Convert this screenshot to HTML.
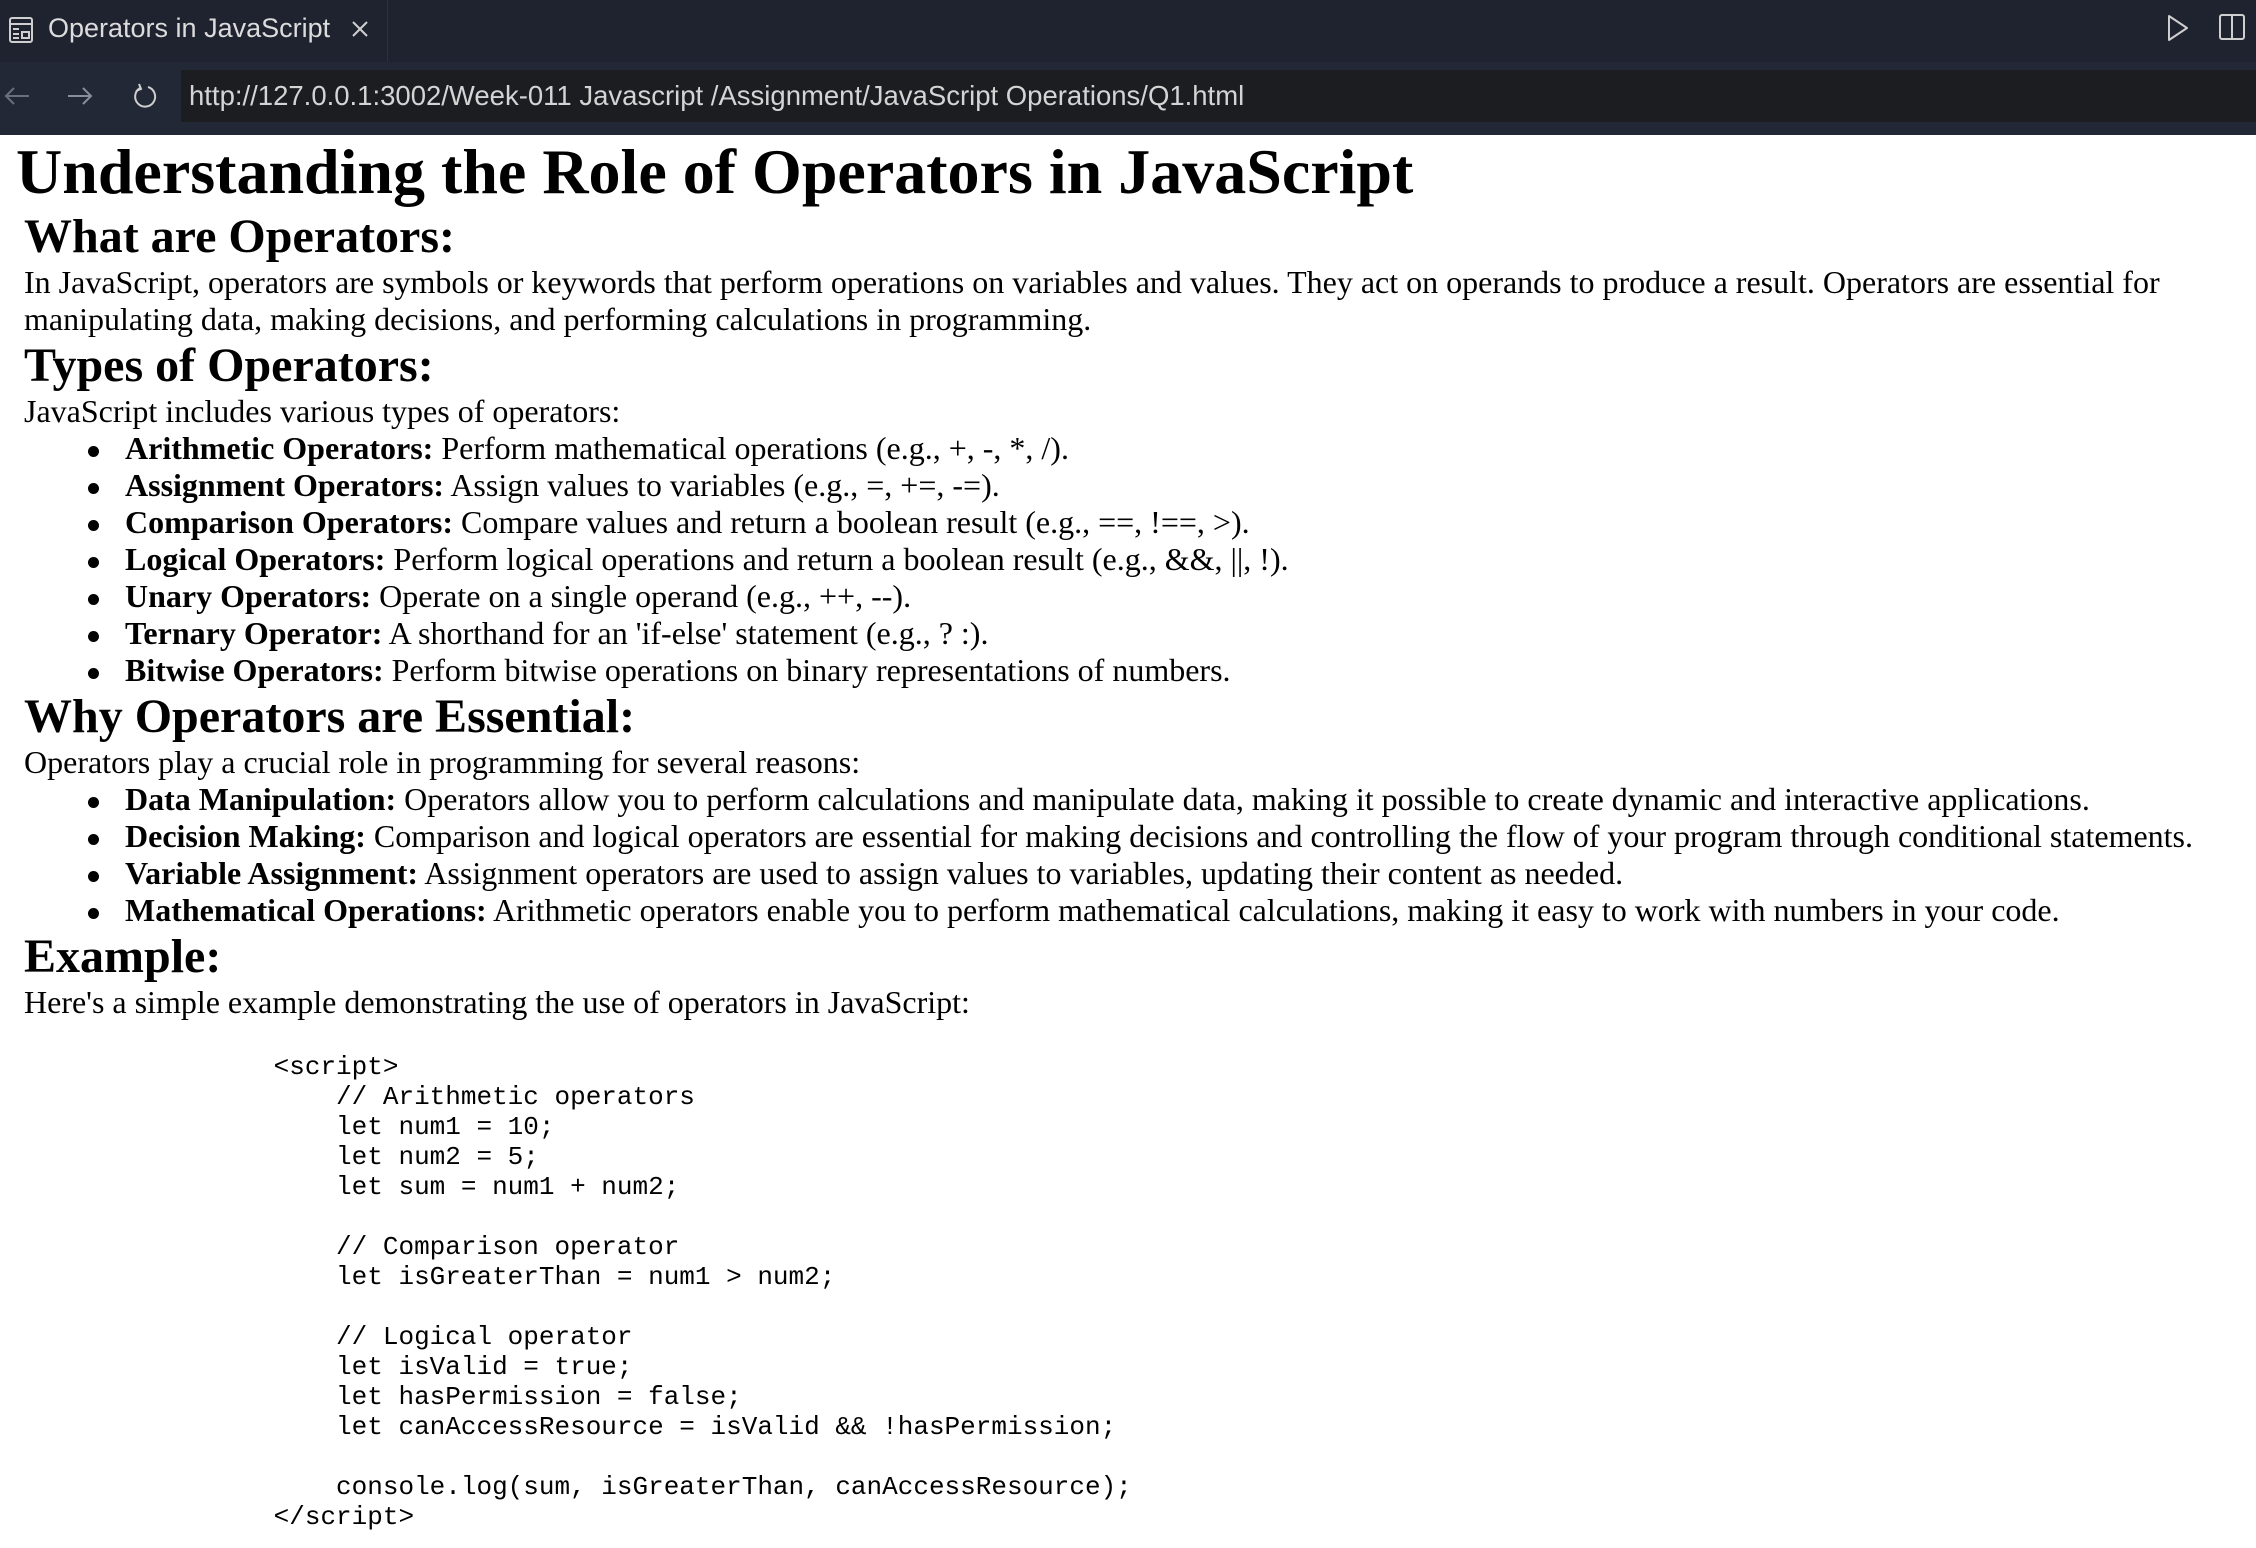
<!DOCTYPE html>
<html><head><meta charset="utf-8">
<style>
*{box-sizing:border-box}
html,body{margin:0;padding:0;width:2256px;height:1548px;overflow:hidden;background:#fff}
#tabs{position:absolute;left:0;top:0;width:2256px;height:62px;background:#1f2330}
#tab{position:absolute;left:0;top:0;width:388px;height:62px;background:#1f2330;border-right:1px solid #2c3140}
#tab .t{position:absolute;left:48px;top:13px;font:27px "Liberation Sans",sans-serif;color:#dcdcdc;white-space:nowrap}
#url{position:absolute;left:0;top:62px;width:2256px;height:73px;background:#232836}
#field{position:absolute;left:181px;top:8px;right:0;height:52px;background:#1c1d21}
#field .u{position:absolute;left:8px;top:10px;font:27.5px "Liberation Sans",sans-serif;color:#d4d4d4;white-space:nowrap}
#page{position:absolute;left:0;top:133px;width:2256px;font-family:"Liberation Serif",serif;color:#000}
h1{margin:0;padding:2px 0 0 16px;font-size:64px;line-height:74px;font-weight:bold;white-space:nowrap}
h2{margin:1px 0 0 24px;font-size:48px;line-height:54px;font-weight:bold}
p{margin:0 0 0 24px;font-size:32px;line-height:37px}
ul{margin:0 0 0 24px;padding-left:101px;font-size:32px;line-height:37px;list-style:none}
li{white-space:nowrap;position:relative}
li::before{content:"";position:absolute;left:-37px;top:16px;width:11px;height:11px;border-radius:50%;background:#000}
pre{margin:31px 0 0 24px;font:26px/30px "Liberation Mono",monospace}
</style></head><body>
<div id="tabs">
 <div id="tab">
  <svg style="position:absolute;left:8px;top:16px" width="26" height="28" viewBox="0 0 26 28" fill="none" stroke="#cfcfcf" stroke-width="2"><rect x="2" y="2" width="22" height="24" rx="2"/><line x1="2" y1="8" x2="24" y2="8"/><line x1="5" y1="13" x2="11" y2="13"/><line x1="5" y1="18" x2="11" y2="18"/><line x1="5" y1="22" x2="11" y2="22"/><rect x="14" y="16" width="7" height="6"/></svg>
  <div class="t">Operators in JavaScript</div>
  <svg style="position:absolute;left:350px;top:19px" width="20" height="20" viewBox="0 0 20 20" stroke="#cfcfcf" stroke-width="2"><line x1="3" y1="3" x2="17" y2="17"/><line x1="17" y1="3" x2="3" y2="17"/></svg>
 </div>
 <svg style="position:absolute;left:2166px;top:14px" width="24" height="28" viewBox="0 0 24 28" fill="none" stroke="#cfcfcf" stroke-width="2" stroke-linejoin="round"><path d="M3 2 L21 14 L3 26 Z"/></svg>
 <svg style="position:absolute;left:2218px;top:13px" width="28" height="28" viewBox="0 0 28 28" fill="none" stroke="#cfcfcf" stroke-width="2"><rect x="2" y="2" width="24" height="24" rx="2"/><line x1="14" y1="2" x2="14" y2="26"/></svg>
</div>
<div id="url">
 <svg style="position:absolute;left:3px;top:22px" width="28" height="24" viewBox="0 0 28 24" fill="none" stroke="#6b6f7a" stroke-width="2"><path d="M26 12 H3 M11 4 L3 12 L11 20"/></svg>
 <svg style="position:absolute;left:66px;top:22px" width="28" height="24" viewBox="0 0 28 24" fill="none" stroke="#8a8e98" stroke-width="2"><path d="M2 12 H25 M17 4 L25 12 L17 20"/></svg>
 <svg style="position:absolute;left:131px;top:20px" width="28" height="30" viewBox="0 0 28 30" fill="none" stroke="#cfcfcf" stroke-width="2"><path d="M9 6 A10 10 0 1 0 17 5"/><path d="M8 2 L10 7 L5 9"/></svg>
 <div id="field"><div class="u">http://127.0.0.1:3002/Week-011 Javascript /Assignment/JavaScript Operations/Q1.html</div></div>
</div>
<div id="page">
<h1>Understanding the Role of Operators in JavaScript</h1>
<h2>What are Operators:</h2>
<p>In JavaScript, operators are symbols or keywords that perform operations on variables and values. They act on operands to produce a result. Operators are essential for manipulating data, making decisions, and performing calculations in programming.</p>
<h2>Types of Operators:</h2>
<p>JavaScript includes various types of operators:</p>
<ul>
<li><b>Arithmetic Operators:</b> Perform mathematical operations (e.g., +, -, *, /).</li>
<li><b>Assignment Operators:</b> Assign values to variables (e.g., =, +=, -=).</li>
<li><b>Comparison Operators:</b> Compare values and return a boolean result (e.g., ==, !==, &gt;).</li>
<li><b>Logical Operators:</b> Perform logical operations and return a boolean result (e.g., &amp;&amp;, ||, !).</li>
<li><b>Unary Operators:</b> Operate on a single operand (e.g., ++, --).</li>
<li><b>Ternary Operator:</b> A shorthand for an 'if-else' statement (e.g., ? :).</li>
<li><b>Bitwise Operators:</b> Perform bitwise operations on binary representations of numbers.</li>
</ul>
<h2>Why Operators are Essential:</h2>
<p>Operators play a crucial role in programming for several reasons:</p>
<ul>
<li><b>Data Manipulation:</b> Operators allow you to perform calculations and manipulate data, making it possible to create dynamic and interactive applications.</li>
<li><b>Decision Making:</b> Comparison and logical operators are essential for making decisions and controlling the flow of your program through conditional statements.</li>
<li><b>Variable Assignment:</b> Assignment operators are used to assign values to variables, updating their content as needed.</li>
<li><b>Mathematical Operations:</b> Arithmetic operators enable you to perform mathematical calculations, making it easy to work with numbers in your code.</li>
</ul>
<h2>Example:</h2>
<p>Here's a simple example demonstrating the use of operators in JavaScript:</p>
<pre>                &lt;script&gt;
                    // Arithmetic operators
                    let num1 = 10;
                    let num2 = 5;
                    let sum = num1 + num2;

                    // Comparison operator
                    let isGreaterThan = num1 &gt; num2;

                    // Logical operator
                    let isValid = true;
                    let hasPermission = false;
                    let canAccessResource = isValid &amp;&amp; !hasPermission;

                    console.log(sum, isGreaterThan, canAccessResource);
                &lt;/script&gt;</pre>
</div>
</body></html>
